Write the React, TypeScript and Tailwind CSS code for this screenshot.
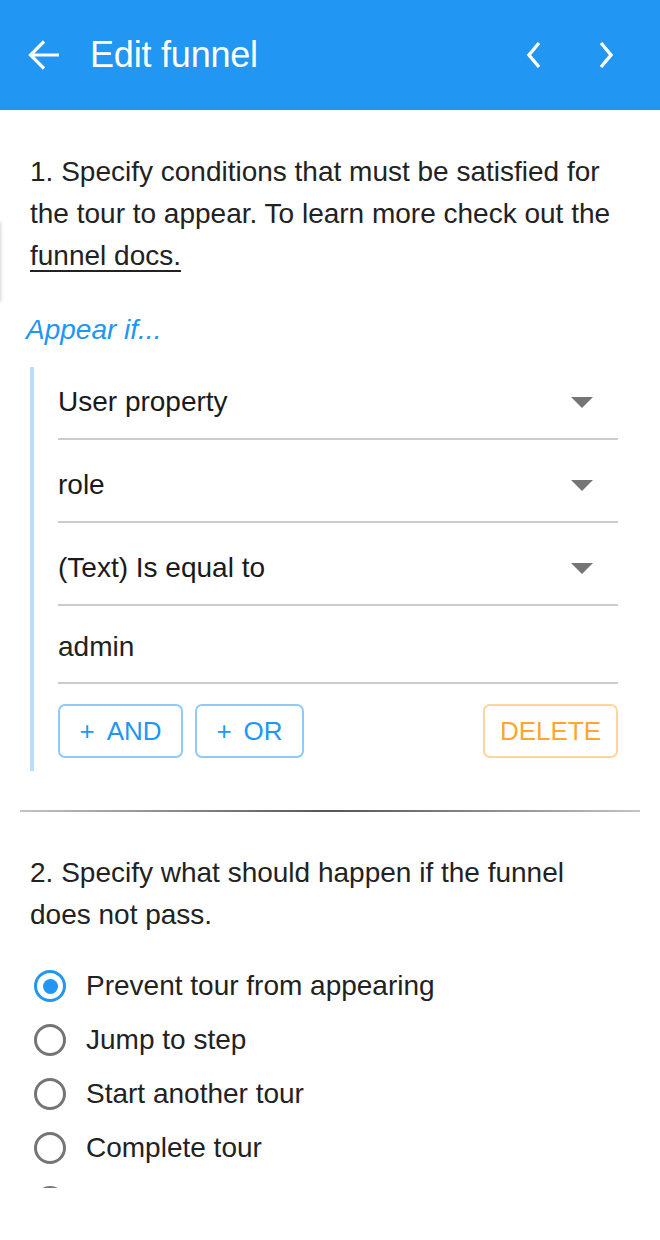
import React from "react";

const font = { fontFamily: '"Liberation Sans", Arial, sans-serif' };

function Caret() {
  return (
    <svg width="22" height="11" viewBox="0 0 22 11" className="shrink-0 mr-[25px]">
      <polygon points="0,0 22,0 11,11" fill="#757575" />
    </svg>
  );
}

function SelectRow({ label, pt }: { label: string; pt: string }) {
  return (
    <div className={`flex items-center justify-between border-b-2 border-[#cccccc] pb-[18px] ${pt}`}>
      <span className="text-[28px] leading-[36px] text-[#1a1a1a]">{label}</span>
      <Caret />
    </div>
  );
}

function Radio({ checked, label }: { checked?: boolean; label: string }) {
  return (
    <div className="flex h-[54px] items-center">
      <div
        className={`ml-[34px] flex h-[32px] w-[32px] items-center justify-center rounded-full border-[3px] ${
          checked ? "border-[#2196f3]" : "border-[#757575]"
        }`}
      >
        {checked && <div className="h-[15px] w-[15px] rounded-full bg-[#2196f3]" />}
      </div>
      <span className="ml-[20px] text-[28px] leading-[36px] text-[#222222]">{label}</span>
    </div>
  );
}

export default function App() {
  return (
    <div className="relative h-[1240px] w-[660px] overflow-hidden bg-white" style={font}>
      <header className="flex h-[110px] items-center bg-[#2196f3] text-white">
        <svg width="34" height="34" viewBox="0 0 34 34" className="ml-[27px]">
          <path d="M32 17H4M17 3.5L3.5 17L17 30.5" stroke="white" strokeWidth="3.2" fill="none" />
        </svg>
        <h1 className="ml-[29px] text-[36px] leading-[40px] font-normal tracking-[-0.2px]">Edit funnel</h1>
        <div className="ml-auto flex items-center">
          <svg width="18" height="28" viewBox="0 0 18 28" className="mr-[54px]">
            <path d="M14 2L4 14L14 26" stroke="white" strokeWidth="3.4" fill="none" />
          </svg>
          <svg width="18" height="28" viewBox="0 0 18 28" className="mr-[45px]">
            <path d="M4 2L14 14L4 26" stroke="white" strokeWidth="3.4" fill="none" />
          </svg>
        </div>
      </header>

      <div className="absolute left-[-12px] top-[222px] h-[80px] w-[12px] bg-white shadow-[0_0_4px_rgba(0,0,0,0.25)]" />

      <main className="h-[1078px] overflow-hidden">
        <p className="mt-[41px] pl-[30px] pr-[20px] text-[28px] leading-[42px] text-[#222222]">
          1. Specify conditions that must be satisfied for
          <br />
          the tour to appear. To learn more check out the
          <br />
          <span className="underline decoration-[1.5px] underline-offset-[5px]">funnel docs.</span>
        </p>

        <div className="mt-[32px] pl-[26px] text-[28px] leading-[42px] italic text-[#2196f3]">Appear if...</div>

        <div className="mt-[16px] ml-[30px] mr-[42px] border-l-[4px] border-[#bbdefb] pl-[24px] pb-[13px]">
          <SelectRow label="User property" pt="pt-[17px]" />
          <SelectRow label="role" pt="pt-[27px]" />
          <SelectRow label="(Text) Is equal to" pt="pt-[27px]" />
          <div className="border-b-2 border-[#cccccc] pt-[23px] pb-[17px]">
            <span className="text-[28px] leading-[36px] text-[#222222]">admin</span>
          </div>
          <div className="mt-[20px] flex items-center">
            <button className="flex h-[54px] w-[125px] items-center justify-center rounded-[7px] border-2 border-[#90caf9] text-[26px] text-[#2196f3]">
              <span>+</span>
              <span className="ml-[12px]">AND</span>
            </button>
            <button className="ml-[12px] flex h-[54px] w-[109px] items-center justify-center rounded-[7px] border-2 border-[#90caf9] text-[26px] text-[#2196f3]">
              <span>+</span>
              <span className="ml-[12px]">OR</span>
            </button>
            <button className="ml-auto flex h-[54px] w-[135px] items-center justify-center rounded-[7px] border-2 border-[#ffd59a] text-[26px] text-[#ffa533]">
              DELETE
            </button>
          </div>
        </div>

        <div className="mx-[20px] mt-[39px] h-[2px] bg-linear-to-r from-[#c4c4c4] via-[#555555] to-[#c4c4c4]" />

        <p className="mt-[40px] pl-[30px] pr-[20px] text-[28px] leading-[42px] text-[#222222]">
          2. Specify what should happen if the funnel
          <br />
          does not pass.
        </p>

        <div className="mt-[23px]">
          <Radio checked label="Prevent tour from appearing" />
          <Radio label="Jump to step" />
          <Radio label="Start another tour" />
          <Radio label="Complete tour" />
          <Radio label="Do nothing" />
        </div>
      </main>
    </div>
  );
}
